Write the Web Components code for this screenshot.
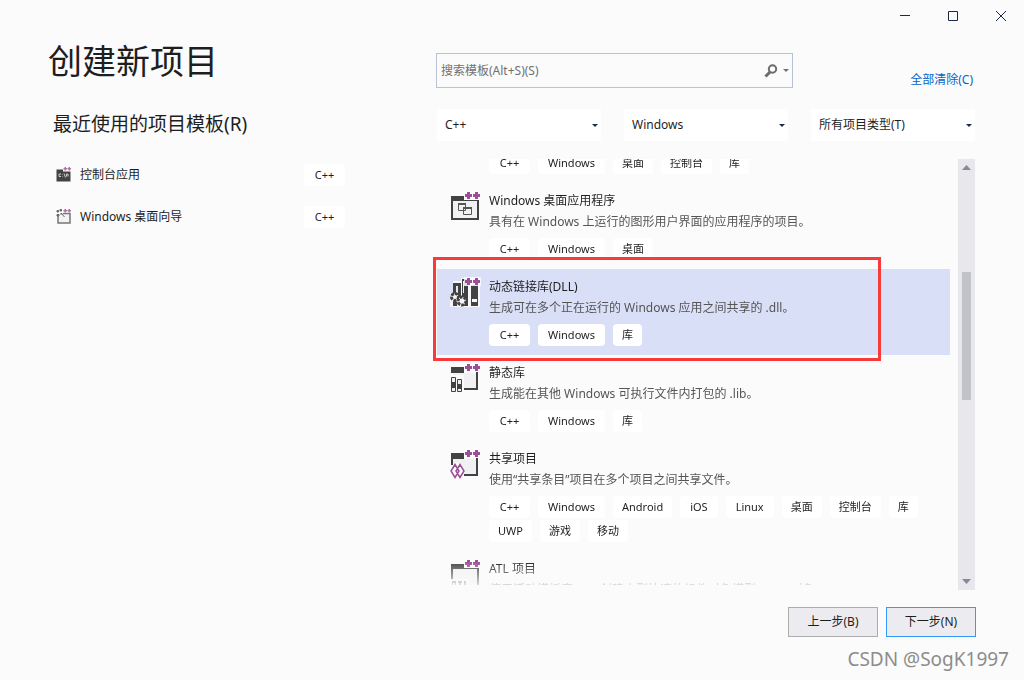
<!DOCTYPE html>
<html lang="zh-CN">
<head>
<meta charset="utf-8">
<title>创建新项目</title>
<style>
  html, body { margin: 0; height: 100%; }
  body {
    background: #fbfbfb; color: #1e1e1e;
    font: 12px/20px "Noto Sans", "Noto Sans CJK SC", sans-serif;
  }
</style>
</head>
<body>
<new-project-window></new-project-window>

<script>
const define = (name, html, setup) => {
  const template = document.createElement('template');
  template.innerHTML = html;
  customElements.define(name, class extends HTMLElement {
    constructor() {
      super();
      this.attachShadow({ mode: 'open' }).append(template.content.cloneNode(true));
    }
    connectedCallback() { if (setup) setup(this, this.shadowRoot); }
  });
};

const plus = (x, y) => `<path d="M${x + 2} ${y}h3v2h2v3h-2v2h-3v-2h-2v-3h2z" fill="#9b4f96"/>`;
const pluses = `<path d="M14 0h17v9H14z" fill="#fbfbfb" opacity=".85"/>${plus(15, 1)}${plus(23, 1)}`;
const frame = `<path d="M1 5h28v24H1z" fill="#424242"/><path d="M3 10h24v17H3z" fill="#f1f1f3"/><path d="M14 5h15v4H14z" fill="#f1f1f3"/>`;
const icons = {
  desktop: frame + `<path d="M8.500 12.500h7v7h-7zM13.500 16.500h8v7h-8z" fill="#f1f1f3" stroke="#555"/><path d="M8 12h8v2H8zM13 16h9v2h-9z" fill="#555"/>` + pluses,
  dll: `<path d="M0 16h3V4h8V1h19v29H0z" fill="#f6f6f8"/>
    <path d="M3 6h8v13H3z" fill="#424242"/><path d="M6 9h2v8H6z" fill="#e6e6ee"/>
    <path d="M12 2h6v27h-6z" fill="#424242"/><path d="M13 4h1v12h-1z" fill="#f1f1f3"/>
    <path d="M21 8h7v21h-7z" fill="#424242"/><path d="M22 22h5v3h-5z" fill="#f6f6f8"/>
    <circle cx="5" cy="20" r="3.500" fill="#f6f6f8" stroke="#424242" stroke-width="3" stroke-dasharray="3 1"/>
    <circle cx="12" cy="24" r="4" fill="#f6f6f8" stroke="#424242" stroke-width="3" stroke-dasharray="3 1"/>
    <path d="M3 25h4v4H3z" fill="#424242"/>` + pluses,
  lib: `<path d="M1 4h13v6H1z" fill="#424242"/><path d="M3 10h24v16H3z" fill="#f1f1f3"/><path d="M26 9h2v18H13v-2h13z" fill="#424242"/>
    <path d="M0 12h14v18H0z" fill="#fbfbfb"/><path d="M1.500 14.500h4v14h-4zM7.500 16.500h4v12h-4z" fill="#eee" stroke="#424242"/><path d="M1 19h5v6H1zM7 21h5v5H7z" fill="#424242"/>` + pluses,
  shared: `<path d="M1 4h13v6H1z" fill="#424242"/><path d="M1 9h2v7H1z" fill="#424242"/><path d="M3 10h23v15H3z" fill="#f1f1f3"/><path d="M26 9h2v18H14v-2h12z" fill="#424242"/>
    <path d="M0 22l5-8h5l5 8-5 8H5z" fill="#fbfbfb"/><path d="M5 15.500l-4 6.500 4 6.500 4-6.500zM10 15.500l-4 6.500 4 6.500 4-6.500z" fill="none" stroke="#9b4f96" stroke-width="1.500"/>` + pluses,
  atl: frame + `<path d="M0 20h19v10H0z" fill="#fbfbfb"/><path d="M2 22h4v8H2zM8 22h4v8H8zM14 22h3v8h-3z" fill="#777"/><path d="M3 24h2v2H3zM8 24h1v6H8zM11 24h1v6h-1zM16 22h1v6h-1z" fill="#fbfbfb"/>` + pluses,
  console: `<path d="M1 5h28v24H1z" fill="#424242"/><path d="M14 1h16v8H14z" fill="#fbfbfb"/><path d="M10 14H6v5h4M13 14v1M13 18v1M16 13l3 8M21 19v-5h3v5" fill="none" stroke="#ccc" stroke-width="2"/><g opacity=".8">${plus(15, 0)}${plus(23, 0)}</g>`,
  wizard: `<path d="M4 9h24v19H4z" fill="#f3f3f3" stroke="#777" stroke-width="3"/><path d="M0 0h14v14H0z" fill="#fbfbfb"/><path d="M2 3h3v3H2zM8 1h3v3H8zM2 11h4v3H2zM10 8l7 8M8 10h5" fill="#666" stroke="#666" stroke-width="2"/><path d="M14 0h16v7H14z" fill="#fbfbfb"/><g opacity=".8">${plus(15, 0)}${plus(23, 0)}</g>`
};

define('vs-icon', `<style>
  :host { display: block; width: 32px; height: 32px; }
  :host([small]) { width: 16px; height: 16px; }
  svg { display: block; width: 100%; height: 100%; }
</style><svg viewBox="0 0 32 32" aria-hidden="true"></svg>`, (host, root) => {
  root.querySelector('svg').innerHTML = icons[host.getAttribute('name')] || '';
});

define('vs-tag', `<style>
  :host {
    display: block; box-sizing: border-box; height: 22px; padding: 0 9px;
    border-radius: 4px; background: #fff; text-align: center;
    font-size: 11px; line-height: 22px; white-space: nowrap;
  }
  :host([kind="cpp"]) { min-width: 41px; }
  :host([kind="win"]) { min-width: 67px; }
  :host([kind="wide"]) { padding: 0 10px; }
</style><slot></slot>`);

define('recent-item', `<style>
  :host { display: flex; align-items: center; height: 42px; gap: 8px; }
  .name { flex: 1; }
</style><div class="icon"></div><span class="name"><slot></slot></span><vs-tag kind="cpp">C++</vs-tag>`, (host, root) => {
  root.querySelector('.icon').innerHTML = `<vs-icon small name="${host.getAttribute('icon')}"></vs-icon>`;
});

define('template-item', `<style>
  :host { display: flex; gap: 7px; padding: 7px 12px 9px 13px; flex: none; }
  :host([selected]) { background: #dadff8; }
  :host([partial]) { padding: 0 12px 9px 52px; margin-top: -7px; }
  :host([partial]) .icon, :host([partial]) .text { display: none; }
  .icon { width: 32px; padding-top: 1px; }
  .body { flex: 1; min-width: 0; }
  .text { height: 48px; }
  .title, .desc { display: block; line-height: 21px; white-space: nowrap; }
  .desc { color: #555; }
  .tags { display: flex; flex-wrap: wrap; gap: 2px 8px; }
</style>
<div class="icon"></div>
<div class="body"><div class="text"><span class="title"><slot name="title"></slot></span><span class="desc"><slot name="desc"></slot></span></div>
<div class="tags"><slot></slot></div></div>`, (host, root) => {
  const name = host.getAttribute('icon');
  if (name) root.querySelector('.icon').innerHTML = `<vs-icon name="${name}"></vs-icon>`;
});

define('filter-select', `<style>
  :host { display: block; position: relative; flex: 1; height: 32px; }
  select {
    appearance: none; width: 100%; height: 100%; border: 0; border-radius: 0; margin: 0;
    background: #fff; color: #1e1e1e; font: inherit; padding: 0 20px 0 8px;
  }
  svg { position: absolute; right: 3px; top: 15px; pointer-events: none; }
</style><select></select><svg width="6" height="4" aria-hidden="true"><path d="M0 0h6L3 3z" fill="#1c2b45"/></svg>`, (host, root) => {
  const select = root.querySelector('select');
  select.setAttribute('aria-label', host.getAttribute('label'));
  select.innerHTML = `<option>${host.getAttribute('value')}</option>`;
});

define('search-box', `<style>
  :host { display: flex; align-items: center; box-sizing: border-box; height: 35px; border: 1px solid #b9c3d6; padding-right: 3px; }
  input { flex: 1; min-width: 0; border: 0; background: none; font: inherit; padding: 0 4px; outline: 0; }
  input::placeholder { color: #717171; opacity: 1; }
  button { border: 0; background: none; padding: 0; height: 24px; display: flex; align-items: center; gap: 5px; }
</style><input type="text" aria-label="搜索模板" placeholder="搜索模板(Alt+S)(S)">
<button aria-label="搜索"><svg width="14" height="14"><circle cx="8.500" cy="5" r="3.700" fill="none" stroke="#6b6b6b" stroke-width="2"/><path d="M6 8l-4.500 4.500" stroke="#6b6b6b" stroke-width="3"/></svg>
<svg width="6" height="4"><path d="M0 0h6L3 3z" fill="#717171"/></svg></button>`);

define('window-controls', `<style>
  :host { display: flex; justify-content: flex-end; }
  button { width: 48px; height: 32px; padding: 0; border: 0; background: none; display: grid; place-items: center; }
  path { fill: none; stroke: #1c2b45; }
</style>
<button aria-label="最小化"><svg width="12" height="10"><path d="M2 4.500h10"/></svg></button>
<button aria-label="最大化"><svg width="12" height="10"><path d="M2.500.5h9v9h-9z"/></svg></button>
<button aria-label="关闭"><svg width="12" height="10"><path d="M2 0l10 10M12 0L2 10"/></svg></button>`);

define('scroll-track', `<style>
  :host { display: flex; flex-direction: column; align-items: center; width: 17px; background: #e7e7ec; }
  svg { flex: none; padding: 6px 0; }
  .before { flex: 96; } .thumb { flex: 128; width: 9px; background: #c2c3c9; } .after { flex: 173; }
  path { fill: #868999; }
</style><svg width="9" height="5"><path d="M0 5h9L4.500 0z"/></svg><div class="before"></div><div class="thumb"></div><div class="after"></div><svg width="9" height="5"><path d="M0 0h9L4.500 5z"/></svg>`);

define('push-button', `<style>
  :host { display: block; }
  button { width: 90px; height: 30px; padding: 0; border: 1px solid #acacac; background: #ececf0; color: #1e1e1e; font: inherit; }
  :host([primary]) button { border-color: #3399ff; }
</style><button type="button"><slot></slot></button>`);

define('new-project-window', `<style>
  :host { display: flex; flex-direction: column; height: 100vh; min-height: 480px; overflow: hidden; position: relative; }
  main { flex: 1; min-height: 0; display: grid; grid-template-columns: 297px minmax(0, 1fr); gap: 91px; padding: 0 49px 0 48px; }
  h1 { font-size: 34px; line-height: 48px; font-weight: 400; margin: 5px 0 0; }
  h2 { font-size: 19px; line-height: 28px; font-weight: 400; margin: 25px 0 0 5px; }
  .recent { padding: 16px 0 0 8px; }
  .right { display: flex; flex-direction: column; min-height: 0; }
  .search { display: flex; justify-content: space-between; align-items: center; padding-top: 19px; }
  search-box { width: 357px; }
  a { color: #0066cc; text-decoration: none; margin: 19px 2px 0 0; }
  .filters { display: flex; gap: 23px; padding: 19px 0 0 1px; }
  .results { flex: 1; min-height: 0; display: flex; gap: 8px; margin-top: 18px; position: relative; }
  .list {
    flex: 1; min-width: 0; display: flex; flex-direction: column; overflow: hidden; margin: 0 0 5px 1px;
    -webkit-mask-image: linear-gradient(to top, rgba(0,0,0,.2), #000 24px);
    mask-image: linear-gradient(to top, rgba(0,0,0,.2), #000 24px);
  }
  .mark { position: absolute; left: -3px; top: 98px; width: 442px; height: 98px; border: 3px solid #f93a3a; pointer-events: none; }
  footer { display: flex; justify-content: flex-end; gap: 8px; padding: 17px 48px 43px; }
  .credit { position: absolute; right: 15px; bottom: 8px; font-size: 19px; line-height: 26px; color: #8c8c8c; }
</style>
<window-controls></window-controls>
<main>
  <section>
    <h1>创建新项目</h1>
    <h2>最近使用的项目模板(R)</h2>
    <div class="recent">
      <recent-item icon="console">控制台应用</recent-item>
      <recent-item icon="wizard">Windows 桌面向导</recent-item>
    </div>
  </section>
  <section class="right">
    <div class="search"><search-box></search-box><a href="#">全部清除(C)</a></div>
    <div class="filters">
      <filter-select label="语言" value="C++"></filter-select>
      <filter-select label="平台" value="Windows"></filter-select>
      <filter-select label="项目类型" value="所有项目类型(T)"></filter-select>
    </div>
    <div class="results">
      <div class="list">
        <template-item partial><vs-tag kind="cpp">C++</vs-tag><vs-tag kind="win">Windows</vs-tag><vs-tag>桌面</vs-tag><vs-tag>控制台</vs-tag><vs-tag>库</vs-tag></template-item>
        <template-item icon="desktop"><span slot="title">Windows 桌面应用程序</span><span slot="desc">具有在 Windows 上运行的图形用户界面的应用程序的项目。</span>
          <vs-tag kind="cpp">C++</vs-tag><vs-tag kind="win">Windows</vs-tag><vs-tag>桌面</vs-tag></template-item>
        <template-item icon="dll" selected><span slot="title">动态链接库(DLL)</span><span slot="desc">生成可在多个正在运行的 Windows 应用之间共享的 .dll。</span>
          <vs-tag kind="cpp">C++</vs-tag><vs-tag kind="win">Windows</vs-tag><vs-tag>库</vs-tag></template-item>
        <template-item icon="lib"><span slot="title">静态库</span><span slot="desc">生成能在其他 Windows 可执行文件内打包的 .lib。</span>
          <vs-tag kind="cpp">C++</vs-tag><vs-tag kind="win">Windows</vs-tag><vs-tag>库</vs-tag></template-item>
        <template-item icon="shared"><span slot="title">共享项目</span><span slot="desc">使用“共享条目”项目在多个项目之间共享文件。</span>
          <vs-tag kind="cpp">C++</vs-tag><vs-tag kind="win">Windows</vs-tag><vs-tag>Android</vs-tag><vs-tag kind="wide">iOS</vs-tag><vs-tag kind="wide">Linux</vs-tag><vs-tag>桌面</vs-tag><vs-tag>控制台</vs-tag><vs-tag>库</vs-tag><vs-tag>UWP</vs-tag><vs-tag>游戏</vs-tag><vs-tag>移动</vs-tag></template-item>
        <template-item icon="atl"><span slot="title">ATL 项目</span><span slot="desc">使用活动模板库(ATL)创建小型快速的组件对象模型(COM)对象。</span></template-item>
      </div>
      <scroll-track></scroll-track>
      <div class="mark"></div>
    </div>
  </section>
</main>
<footer><push-button>上一步(B)</push-button><push-button primary>下一步(N)</push-button></footer>
<div class="credit">CSDN @SogK1997</div>`);
</script>
</body>
</html>
